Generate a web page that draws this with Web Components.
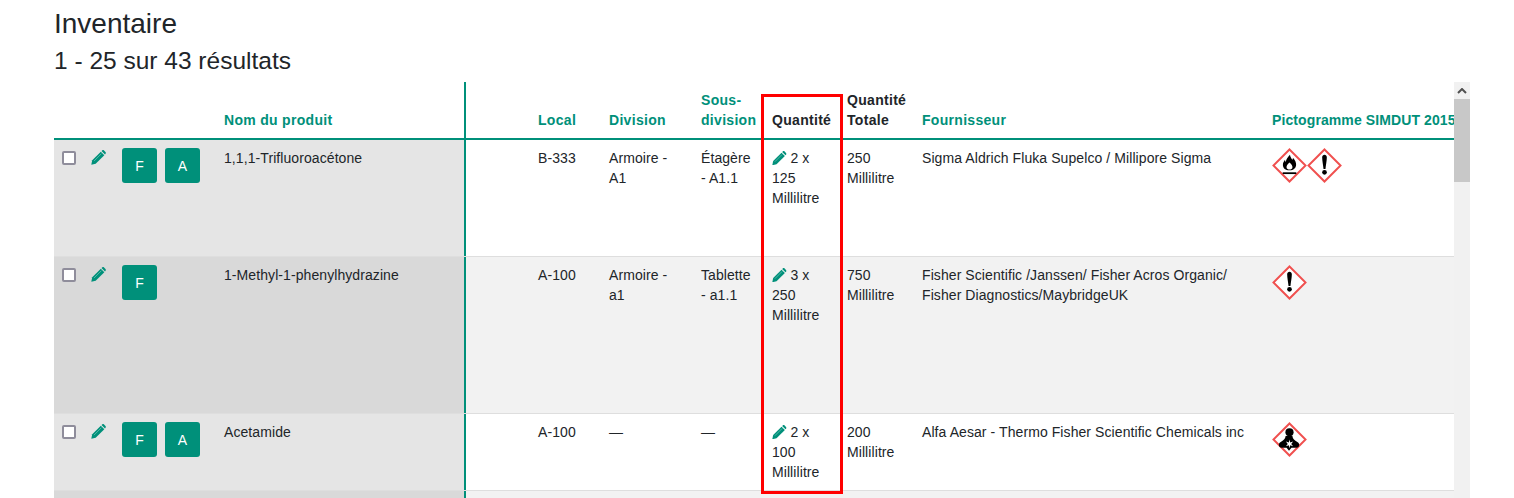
<!DOCTYPE html>
<html lang="fr">
<head>
<meta charset="utf-8">
<title>Inventaire</title>
<style>
  html, body { margin: 0; height: 498px; overflow: hidden; background: #fff; }
  body { font: 14px/20px "Liberation Sans", Arial, sans-serif; color: #212529; }
</style>
</head>
<body>

<inv-page>
  <span slot="title">Inventaire</span>
  <span slot="count">1 - 25 sur 43 résultats</span>
  <inv-table>
    <inv-row slot="head" head>
      <span slot="name">Nom du produit</span>
      <span slot="local">Local</span>
      <span slot="division">Division</span>
      <span slot="sub">Sous-division</span>
      <span slot="qty" style="color:#212529">Quantité</span>
      <span slot="total" style="color:#212529">Quantité Totale</span>
      <span slot="supplier">Fournisseur</span>
      <span slot="picto">Pictogramme SIMDUT 2015</span>
    </inv-row>

    <inv-row height="116">
      <inv-check slot="check"></inv-check>
      <inv-pencil slot="edit"></inv-pencil>
      <inv-badge slot="badges">F</inv-badge>
      <inv-badge slot="badges">A</inv-badge>
      <span slot="name">1,1,1-Trifluoroacétone</span>
      <span slot="local">B-333</span>
      <span slot="division">Armoire - A1</span>
      <span slot="sub">Étagère - A1.1</span>
      <span slot="qty"><inv-pencil inline></inv-pencil> 2 x 125 Millilitre</span>
      <span slot="total">250 Millilitre</span>
      <span slot="supplier">Sigma Aldrich Fluka Supelco / Millipore Sigma</span>
      <inv-picto slot="picto" type="flame"></inv-picto>
      <inv-picto slot="picto" type="bang"></inv-picto>
    </inv-row>

    <inv-row height="156" even>
      <inv-check slot="check"></inv-check>
      <inv-pencil slot="edit"></inv-pencil>
      <inv-badge slot="badges">F</inv-badge>
      <span slot="name">1-Methyl-1-phenylhydrazine</span>
      <span slot="local">A-100</span>
      <span slot="division">Armoire - a1</span>
      <span slot="sub">Tablette - a1.1</span>
      <span slot="qty"><inv-pencil inline></inv-pencil> 3 x 250 Millilitre</span>
      <span slot="total">750 Millilitre</span>
      <span slot="supplier">Fisher Scientific /Janssen/ Fisher Acros Organic/ Fisher Diagnostics/MaybridgeUK</span>
      <inv-picto slot="picto" type="bang"></inv-picto>
    </inv-row>

    <inv-row height="76">
      <inv-check slot="check"></inv-check>
      <inv-pencil slot="edit"></inv-pencil>
      <inv-badge slot="badges">F</inv-badge>
      <inv-badge slot="badges">A</inv-badge>
      <span slot="name">Acetamide</span>
      <span slot="local">A-100</span>
      <span slot="division">—</span>
      <span slot="sub">—</span>
      <span slot="qty"><inv-pencil inline></inv-pencil> 2 x 100 Millilitre</span>
      <span slot="total">200 Millilitre</span>
      <span slot="supplier">Alfa Aesar - Thermo Fisher Scientific Chemicals inc</span>
      <inv-picto slot="picto" type="health"></inv-picto>
    </inv-row>

    <inv-row height="76" even></inv-row>
  </inv-table>
</inv-page>

<script>
const GREEN = "#00907a";

class InvPage extends HTMLElement {
  constructor() {
    super();
    this.attachShadow({ mode: "open" }).innerHTML = `
      <style>
        :host { display: block; padding: 7px 44px 0 54px; }
        h1, h2 { margin: 0; font-weight: normal; }
        h1 { font-size: 28px; line-height: 34px; }
        h2 { font-size: 24.5px; line-height: 30px; margin: 5px 0 6px; }
      </style>
      <h1><slot name="title"></slot></h1>
      <h2><slot name="count"></slot></h2>
      <slot></slot>
    `;
  }
}

class InvTable extends HTMLElement {
  constructor() {
    super();
    this.attachShadow({ mode: "open" }).innerHTML = `
      <style>
        :host { display: flex; position: relative; height: 416px; overflow: hidden; }
        .rows { width: 1400px; flex: none; overflow: hidden; }
        .bar { width: 16px; flex: none; background: #f1f1f1; display: flex; flex-direction: column; }
        .up { height: 17px; display: flex; align-items: center; justify-content: center; }
        .thumb { height: 83px; background: #c8c8c8; }
        .mark { position: absolute; left: 707px; top: 12px; width: 76px; height: 394px; border: 3px solid #f00; }
      </style>
      <div class="rows"><slot name="head"></slot><slot></slot></div>
      <div class="bar">
        <div class="up"><svg width="10" height="6" viewBox="0 0 10 6"><path d="M1 5l4-4 4 4" fill="none" stroke="#505050" stroke-width="2"/></svg></div>
        <div class="thumb"></div>
      </div>
      <div class="mark"></div>
    `;
  }
}

class InvRow extends HTMLElement {
  constructor() {
    super();
    this.attachShadow({ mode: "open" }).innerHTML = `
      <style>
        :host {
          display: grid;
          grid-template-columns: 37px 31px 102px 240px 74px 71px 92px 71px 75px 75px 350px 182px;
          box-sizing: border-box;
          border-bottom: 1px solid #dedede;
          background: var(--right, #fff);
          letter-spacing: .08px;
        }
        :host([even]) { --right: #f2f2f2; --left: #d9d9d9; }
        :host(:not([head]):not([even])) { --left: #e5e5e5; }
        :host([head]) {
          height: 58px;
          border-bottom: 2px solid ${GREEN};
          --left: #fff;
          align-items: end;
          font-weight: bold;
          letter-spacing: .3px;
          color: ${GREEN};
          background: #fff;
        }
        .cell { padding: 8px 16px 8px 0; min-width: 0; }
        .left { background: var(--left); align-self: stretch; display: flex; }
        .check { padding: 11px 0 0 8px; }
        .edit { padding: 10px 0 0; }
        .badges { padding: 8px 0 0; gap: 8px; }
        .name { align-items: flex-end; }
        :host(:not([head])) .name { align-items: flex-start; }
        .rule { padding: 0; border-left: 2px solid ${GREEN}; align-self: stretch; }
        .picto { padding: 8px 0 0; display: flex; white-space: nowrap; overflow: hidden; }
        :host([head]) .picto { padding-bottom: 8px; letter-spacing: .1px; }
      </style>
      <div class="left check"><slot name="check"></slot></div>
      <div class="left edit"><slot name="edit"></slot></div>
      <div class="left badges"><slot name="badges"></slot></div>
      <div class="left name cell"><slot name="name"></slot></div>
      <div class="rule"></div>
      <div class="cell"><slot name="local"></slot></div>
      <div class="cell"><slot name="division"></slot></div>
      <div class="cell"><slot name="sub"></slot></div>
      <div class="cell"><slot name="qty"></slot></div>
      <div class="cell"><slot name="total"></slot></div>
      <div class="cell"><slot name="supplier"></slot></div>
      <div class="picto"><slot name="picto"></slot></div>
    `;
  }
  connectedCallback() {
    if (this.hasAttribute("height")) {
      this.style.height = (Number(this.getAttribute("height")) + 1) + "px";
    }
  }
}

class InvCheck extends HTMLElement {
  constructor() {
    super();
    this.attachShadow({ mode: "open" }).innerHTML = `
      <style>
        :host { display: block; width: 14px; height: 14px; }
        input {
          appearance: none; display: block; margin: 0; box-sizing: border-box;
          width: 14px; height: 14px; background: #fff;
          border: 2px solid #8f8d9b; border-radius: 2px;
        }
      </style>
      <input type="checkbox" aria-label="Sélectionner">
    `;
  }
}

class InvPencil extends HTMLElement {
  constructor() {
    super();
    this.attachShadow({ mode: "open" }).innerHTML = `
      <style>
        :host { display: block; width: 15px; height: 15px; color: ${GREEN}; }
        :host([inline]) { display: inline-block; width: 14.5px; height: 14.5px; vertical-align: -2px; }
        svg { display: block; width: 100%; height: 100%; }
      </style>
      <svg viewBox="0 0 16 16">
        <path d="M.3 15.7l1-4.700L10.5 1.800l3.700 3.700L5 14.700z" fill="currentColor"/>
        <path d="M11.2 1.100l.7-.6c.6-.5 1.400-.5 2 0l1.600 1.600c.5.6.5 1.400 0 2l-.6.700z" fill="currentColor"/>
        <path d="M3.2 11.800l7.900-7.900" stroke="#6fc4b6" stroke-width=".8" fill="none"/>
      </svg>
    `;
  }
}

class InvBadge extends HTMLElement {
  constructor() {
    super();
    this.attachShadow({ mode: "open" }).innerHTML = `
      <style>
        :host {
          display: inline-flex; align-items: center; justify-content: center;
          width: 35px; height: 35px; border-radius: 3px;
          background: ${GREEN}; color: #fff; font-size: 14px;
        }
      </style>
      <slot></slot>
    `;
  }
}

const SYMBOLS = {
  flame: `
    <path d="M18.5 7c.2 2.500 1.500 3.600 2.400 5.200.5-.6.700-1.300.6-2.200 2.200 2.300 3.500 4.900 3.300 7.500-.2 3.200-2.600 5.500-6.800 5.500s-6.600-2.300-6.800-5.300c-.1-2.300 1-4 2.200-5.500 0 1.100.3 1.800.8 2.300.3-2.800 2-5.200 4.300-7.500z" fill="#000"/>
    <path d="M18 15c2 1.900 3.300 3.500 3 5.200-.3 1.200-1.400 1.800-3 1.800s-2.700-.6-3-1.800c-.3-1.700 1-3.300 3-5.200z" fill="#fff"/>
    <rect x="11" y="25" width="14" height="1.800" fill="#000"/>`,
  bang: `
    <path d="M15.6 9.500c0-1.600 1.100-2.500 2.400-2.500s2.400.9 2.400 2.500c0 3.400-1 8.500-1.400 12h-2c-.4-3.500-1.400-8.600-1.400-12z" fill="#000"/>
    <circle cx="18" cy="25" r="2.400" fill="#000"/>`,
  health: `
    <circle cx="18" cy="10.500" r="4.200" fill="#000"/>
    <path d="M15 14.500h6c.4 2.500 1.500 4 3.500 5 2.400 1.200 3.500 2.400 3.500 4 0 2-1.300 3-3 3h-5l-2.500 3-2.500-3h-5c-1.700 0-3-1-3-3 0-1.600 1.100-2.800 3.500-4 2-1 3.100-2.500 3.500-5z" fill="#000"/>
    <path d="M18 18l.7 3.200 3-1.200-1.900 2.500 1.900 2.500-3-1.200-.7 3.200-.7-3.200-3 1.200 1.900-2.500-1.900-2.500 3 1.200z" fill="#fff"/>`
};

class InvPicto extends HTMLElement {
  constructor() {
    super();
    this.attachShadow({ mode: "open" });
  }
  connectedCallback() {
    const type = this.getAttribute("type");
    this.shadowRoot.innerHTML = `
      <style>
        :host { display: block; width: 35px; height: 35px; flex: none; }
        svg { display: block; width: 100%; height: 100%; }
      </style>
      <svg viewBox="0 0 36 36">
        <path d="M18 1.500L34.500 18 18 34.500 1.500 18z" fill="#fff" stroke="#f0504f" stroke-width="2"/>
        ${SYMBOLS[type]}
      </svg>
    `;
  }
}

customElements.define("inv-page", InvPage);
customElements.define("inv-table", InvTable);
customElements.define("inv-row", InvRow);
customElements.define("inv-check", InvCheck);
customElements.define("inv-pencil", InvPencil);
customElements.define("inv-badge", InvBadge);
customElements.define("inv-picto", InvPicto);
</script>
</body>
</html>
